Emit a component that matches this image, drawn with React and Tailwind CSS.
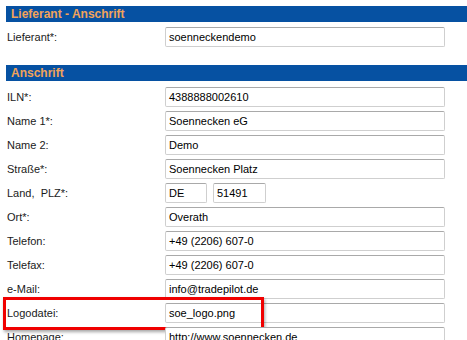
import React from 'react';

const rows = [
  { label: 'ILN*:', value: '4388888002610' },
  { label: 'Name 1*:', value: 'Soennecken eG' },
  { label: 'Name 2:', value: 'Demo' },
  { label: 'Straße*:', value: 'Soennecken Platz' },
  { label: 'Land,  PLZ*:', split: ['DE', '51491'] },
  { label: 'Ort*:', value: 'Overath' },
  { label: 'Telefon:', value: '+49 (2206) 607-0' },
  { label: 'Telefax:', value: '+49 (2206) 607-0' },
  { label: 'e-Mail:', value: 'info@tradepilot.de' },
  { label: 'Logodatei:', value: 'soe_logo.png', marked: true },
  { label: 'Homepage:', value: 'http://www.soennecken.de' },
];

function Field({ value, width }) {
  return (
    <div
      className={`h-[20px] ${width} flex items-center px-[3px] bg-white border border-[#cfcfcf] border-t-[#a9a9a9] rounded-[2px] text-[11px] text-black`}
    >
      {value}
    </div>
  );
}

function Row({ label, value, split, marked }) {
  return (
    <div className="relative flex items-center h-[24px]">
      {marked && (
        <div className="absolute left-[-3px] top-[-4px] w-[261px] h-[33px] border-[3px] border-[#f00000] shadow-[1px_2px_3px_rgba(0,0,0,0.35)] pointer-events-none" />
      )}
      <div className="w-[159px] pl-[1px] whitespace-pre text-[11px] text-[#1a1a1a]">{label}</div>
      {split ? (
        <div className="flex gap-[6px]">
          <Field value={split[0]} width="w-[42px]" />
          <Field value={split[1]} width="w-[53px]" />
        </div>
      ) : (
        <Field value={value} width="w-[280px]" />
      )}
    </div>
  );
}

function Header({ title }) {
  return (
    <div className="h-[16px] bg-[#0651a2] flex items-center pl-[5px] text-[12px] font-bold text-[#f2a35a] leading-none">
      {title}
    </div>
  );
}

export default function App() {
  return (
    <div
      className="w-[467px] h-[340px] overflow-hidden bg-white pl-[6px] pt-[6px]"
      style={{ fontFamily: '"Liberation Sans", Arial, sans-serif' }}
    >
      <Header title="Lieferant - Anschrift" />
      <div className="pt-[3px]">
        <Row label="Lieferant*:" value="soenneckendemo" />
      </div>
      <div className="mt-[16px]">
        <Header title="Anschrift" />
      </div>
      <div className="pt-[4px]">
        {rows.map((r) => (
          <Row key={r.label} {...r} />
        ))}
      </div>
    </div>
  );
}
